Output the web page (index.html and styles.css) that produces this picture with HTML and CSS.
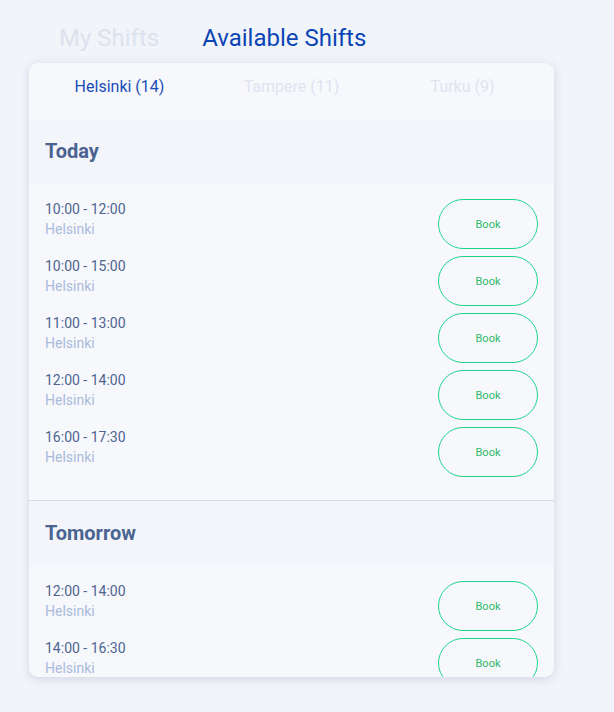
FILE: index.html
```html
<!DOCTYPE html>
<html>
<head>
<meta charset="utf-8">
<link rel="stylesheet" href="styles.css">
</head>
<body>
<div class="page">
  <nav class="top-tabs">
    <span class="top-tab">My Shifts</span>
    <span class="top-tab active">Available Shifts</span>
  </nav>
  <div class="card">
    <div class="city-tabs">
      <span class="city-tab active">Helsinki (14)</span>
      <span class="city-tab">Tampere (11)</span>
      <span class="city-tab">Turku (9)</span>
    </div>
    <div class="scroll">
      <section class="day">
        <h2 class="day-title">Today</h2>
        <div class="list">
          <div class="row"><div class="info"><div class="time">10:00 - 12:00</div><div class="place">Helsinki</div></div><button class="book">Book</button></div>
          <div class="row"><div class="info"><div class="time">10:00 - 15:00</div><div class="place">Helsinki</div></div><button class="book">Book</button></div>
          <div class="row"><div class="info"><div class="time">11:00 - 13:00</div><div class="place">Helsinki</div></div><button class="book">Book</button></div>
          <div class="row"><div class="info"><div class="time">12:00 - 14:00</div><div class="place">Helsinki</div></div><button class="book">Book</button></div>
          <div class="row"><div class="info"><div class="time">16:00 - 17:30</div><div class="place">Helsinki</div></div><button class="book">Book</button></div>
        </div>
      </section>
      <section class="day divided">
        <h2 class="day-title">Tomorrow</h2>
        <div class="list">
          <div class="row"><div class="info"><div class="time">12:00 - 14:00</div><div class="place">Helsinki</div></div><button class="book">Book</button></div>
          <div class="row"><div class="info"><div class="time">14:00 - 16:30</div><div class="place">Helsinki</div></div><button class="book">Book</button></div>
        </div>
      </section>
    </div>
  </div>
</div>
</body>
</html>
```

FILE: styles.css
```css
* { box-sizing: border-box; }
html, body {
  margin: 0;
  padding: 0;
  background: #f1f4f9;
  font-family: Roboto, "Liberation Sans", sans-serif;
}
.page {
  width: 614px;
  height: 712px;
  padding: 23px 60px 0 29px;
  overflow: hidden;
}
.top-tabs {
  display: flex;
  gap: 43px;
  padding-left: 30px;
  margin-bottom: 10px;
}
.top-tab {
  font-size: 24px;
  line-height: 30px;
  color: #dce2ee;
  font-weight: 400;
}
.top-tab.active {
  color: #0b45b5;
}
.card {
  width: 525px;
  height: 614px;
  background: #f7f8fc;
  border-radius: 9px;
  box-shadow: 0 2px 10px rgba(60, 80, 140, 0.18);
  overflow: hidden;
  display: flex;
  flex-direction: column;
}
.city-tabs {
  display: grid;
  grid-template-columns: 1fr 1fr 1fr;
  padding: 14px 0 22px;
  flex: none;
}
.city-tab {
  text-align: center;
  font-size: 16px;
  line-height: 20px;
  color: #dfe4ef;
}
.city-tab:first-child { padding-left: 6px; }
.city-tab:last-child { padding-right: 8px; }
.city-tab.active { color: #1a4db8; }
.scroll {
  flex: 1;
  overflow: hidden;
}
.day.divided {
  border-top: 1px solid #d8dce6;
}
.day-title {
  margin: 0;
  height: 64px;
  line-height: 64px;
  padding: 0 16px;
  background: #f3f5fa;
  font-size: 20px;
  font-weight: 700;
  color: #4a6491;
}
.list {
  padding: 16px;
}
.row {
  display: flex;
  justify-content: space-between;
  align-items: flex-start;
  height: 50px;
  margin-bottom: 7px;
}
.time {
  font-size: 14px;
  line-height: 20px;
  color: #4d6590;
}
.place {
  font-size: 14px;
  line-height: 20px;
  color: #a9bbdb;
}
.book {
  width: 100px;
  height: 50px;
  border: 1px solid #1ed488;
  border-radius: 25px;
  background: transparent;
  color: #2fb86a;
  font-family: Roboto, "Liberation Sans", sans-serif;
  font-size: 11px;
  padding: 0;
}
```
